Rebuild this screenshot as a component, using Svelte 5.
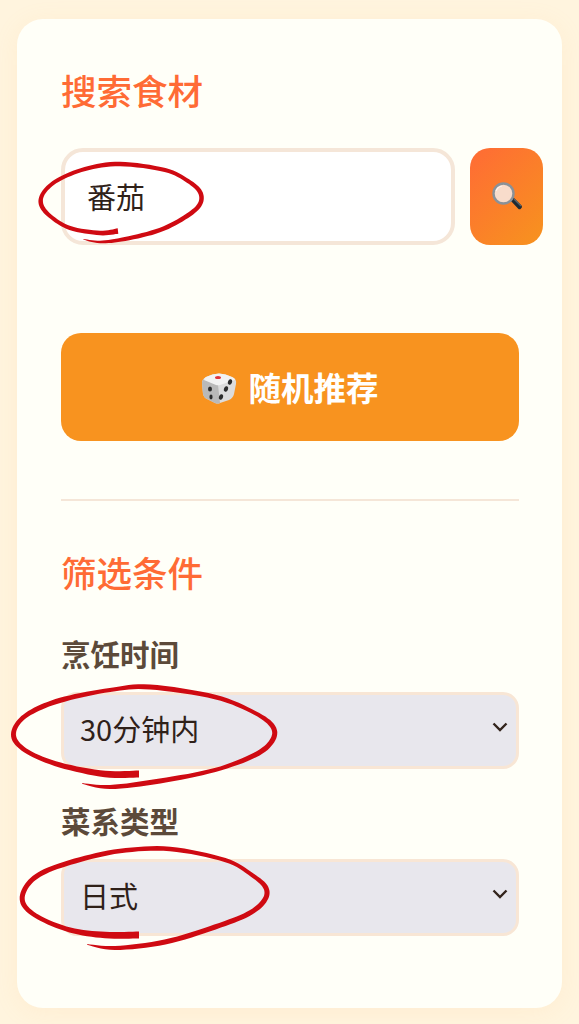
<script>
	let keyword = $state('番茄');
	let time = $state('30分钟内');
	let cuisine = $state('日式');

	const timeOptions = ['不限', '15分钟内', '30分钟内', '60分钟内'];
	const cuisineOptions = ['不限', '中式', '西式', '日式', '韩式'];

	// [x, y, width] along each pen stroke
	const marks = [
		[[118,231,5.5],[100,233,4.5],[70,228,4],[50,216,4],[41,204,4.5],[44,192,4],[58,180,4],[85,169,4],[120,164,4.5],[165,170,4],[188,181,4],[200,192,4.5],[200,204,4.5],[187,216,4.5],[160,230,4.5],[125,239,4],[100,242,2.5],[82,239,0.5]],
		[[139,774,7],[105,774,6.5],[60,765,5],[28,752,4.5],[14,738,5],[18,723,4.5],[35,710,5],[65,699,5],[110,690,4],[150,687,5],[215,697,4.5],[255,713,4],[273,727,5],[272,741,5],[255,755,5],[215,770,4],[160,781,5],[110,787,4],[80,783,0.5]],
		[[139,935,7],[105,935,6.5],[70,930,5],[38,917,4.5],[23,903,5],[26,887,5],[42,873,5],[75,861,5],[120,851,4.5],[170,849,4.5],[225,860,4],[252,875,4],[266,888,5],[264,901,5],[248,914,5],[215,927,5],[165,942,5],[115,948,4],[85,944,0.5]]
	];

	function strokePath(pts) {
		const left = [];
		const right = [];
		for (let i = 0; i < pts.length - 1; i++) {
			const p0 = pts[Math.max(i - 1, 0)];
			const p1 = pts[i];
			const p2 = pts[i + 1];
			const p3 = pts[Math.min(i + 2, pts.length - 1)];
			for (let s = 0; s < 8; s++) {
				const t = s / 8;
				const cr = (k) =>
					0.5 * (2 * p1[k] + (p2[k] - p0[k]) * t + (2 * p0[k] - 5 * p1[k] + 4 * p2[k] - p3[k]) * t * t + (3 * p1[k] - p0[k] - 3 * p2[k] + p3[k]) * t * t * t);
				const slope = (k) =>
					0.5 * (p2[k] - p0[k] + 2 * (2 * p0[k] - 5 * p1[k] + 4 * p2[k] - p3[k]) * t + 3 * (3 * p1[k] - p0[k] - 3 * p2[k] + p3[k]) * t * t);
				const dx = slope(0);
				const dy = slope(1);
				const len = Math.hypot(dx, dy) || 1;
				const w = cr(2) / 2;
				left.push([cr(0) - (dy / len) * w, cr(1) + (dx / len) * w]);
				right.push([cr(0) + (dy / len) * w, cr(1) - (dx / len) * w]);
			}
		}
		const all = left.concat(right.reverse());
		return 'M' + all.map((p) => p[0].toFixed(1) + ' ' + p[1].toFixed(1)).join('L') + 'Z';
	}
</script>

<div class="page">
	<main class="card">
		<h2>搜索食材</h2>
		<div class="search-row">
			<input class="search-input" type="text" bind:value={keyword} />
			<button class="search-btn" type="button" aria-label="搜索">
				<svg width="32" height="32" viewBox="0 0 32 32">
					<path d="M19 19l3-3 8 8a2 2 0 0 1 0 3.4 2 2 0 0 1-3 0z" fill="#1f2a33" />
					<path d="M23 18l7 7" stroke="#55636e" stroke-width="1.2" />
					<circle cx="12.5" cy="12.5" r="10" fill="#f8dccb" stroke="#8a9198" stroke-width="2.4" />
					<path d="M5 10a8 8 0 0 1 6-5" stroke="#fff" stroke-width="1.2" fill="none" opacity="0.7" />
				</svg>
			</button>
		</div>

		<button class="random-btn" type="button">
			<svg width="36" height="34" viewBox="0 0 36 34">
				<path d="M5 7 Q18 0 31 7 Q36 9 35 14 L33 24 Q32 28 28 30 L19 33 Q17 34 14 33 L6 29 Q3 28 2 24 L1 13 Q1 9 5 7z" fill="#dcdcdc" />
				<path d="M19 33 Q17 34 14 33 L6 29 Q3 28 2 24 L1 13 Q1 10 3 9 L17 15 Z" fill="#b9b9b9" />
				<path d="M5 7 Q18 0 31 7 Q34 8 34 10 L19 15 Q17 15.500 15 15 L3 10 Q3 8 5 7z" fill="#f2f2f2" />
				<ellipse cx="17" cy="7.500" rx="3" ry="1.600" fill="#e0343c" />
				<ellipse cx="9" cy="19" rx="2" ry="2.600" fill="#2c2c2c" />
				<ellipse cx="10" cy="27" rx="1.600" ry="2.400" fill="#2c2c2c" />
				<ellipse cx="29" cy="12" rx="2" ry="2.800" fill="#2c2c2c" transform="rotate(20 29 12)" />
				<ellipse cx="25" cy="19" rx="2" ry="2.800" fill="#2c2c2c" transform="rotate(20 25 19)" />
				<ellipse cx="20" cy="27" rx="2" ry="2.800" fill="#2c2c2c" transform="rotate(20 20 27)" />
			</svg>
			<span>随机推荐</span>
		</button>

		<hr />

		<h2 class="filter-title">筛选条件</h2>

		<label class="field-label" for="time">烹饪时间</label>
		<div class="select-wrap">
			<select id="time" bind:value={time}>
				{#each timeOptions as opt}
					<option value={opt}>{opt}</option>
				{/each}
			</select>
			<svg class="chevron" width="16" height="10" viewBox="0 0 16 10">
				<path d="M1.500 1.500L8 8l6.500-6.500" fill="none" stroke="#33241c" stroke-width="2.400" />
			</svg>
		</div>

		<label class="field-label second" for="cuisine">菜系类型</label>
		<div class="select-wrap">
			<select id="cuisine" bind:value={cuisine}>
				{#each cuisineOptions as opt}
					<option value={opt}>{opt}</option>
				{/each}
			</select>
			<svg class="chevron" width="16" height="10" viewBox="0 0 16 10">
				<path d="M1.500 1.500L8 8l6.500-6.500" fill="none" stroke="#33241c" stroke-width="2.400" />
			</svg>
		</div>
	</main>

	<!-- red pen annotations drawn over the form -->
	<svg class="marks" width="579" height="1024" viewBox="0 0 579 1024" aria-hidden="true">
		{#each marks as mark}
			<path d={strokePath(mark)} fill="#cf0a12" />
		{/each}
	</svg>
</div>

<style>
	:global(body) {
		background: #fff4de;
	}

	.page {
		position: relative;
		box-sizing: border-box;
		height: 1024px;
		padding: 19px 17px 16px;
		overflow: hidden;
		background: #fff4de;
		font-family: "Noto Sans CJK SC", "Noto Sans", sans-serif;
		color: #33241c;
	}

	.card {
		box-sizing: border-box;
		height: 989px;
		padding: 48px 43px 0 44px;
		background: #fffff8;
		border-radius: 26px;
		box-shadow: 0 4px 24px rgba(255, 200, 120, 0.12);
	}

	h2 {
		margin: 0;
		font-size: 35.5px;
		line-height: 46px;
		font-weight: 500;
		color: #ff6b35;
	}

	.search-row {
		display: flex;
		gap: 15px;
		margin-top: 35px;
	}

	.search-input {
		box-sizing: border-box;
		flex: none;
		width: 394px;
		height: 97px;
		padding: 0 22px 2px;
		background: #fff;
		border: 4px solid #f5e6d8;
		border-radius: 22px;
		font: inherit;
		font-size: 29px;
		color: #2f2119;
		outline: none;
	}

	.search-btn {
		flex: none;
		display: flex;
		align-items: center;
		justify-content: center;
		width: 73px;
		height: 97px;
		padding: 0;
		border: none;
		border-radius: 20px;
		background: linear-gradient(135deg, #ff6b35, #f7931e);
		cursor: pointer;
	}

	.random-btn {
		display: flex;
		align-items: center;
		justify-content: center;
		gap: 11px;
		width: 100%;
		height: 108px;
		margin-top: 88px;
		padding: 0;
		border: none;
		border-radius: 20px;
		background: #f8931f;
		color: #fff;
		font: inherit;
		font-size: 32.5px;
		font-weight: 700;
		cursor: pointer;
	}

	.random-btn span {
		margin-bottom: 2px;
	}

	hr {
		height: 2px;
		margin: 58px 0 0;
		border: none;
		background: #f5e6d8;
	}

	.filter-title {
		margin-top: 48px;
	}

	.field-label {
		display: block;
		margin-top: 38px;
		font-size: 29.5px;
		line-height: 40px;
		font-weight: 700;
		color: #5c4a3a;
	}

	.field-label.second {
		margin-top: 31px;
	}

	.select-wrap {
		position: relative;
		margin-top: 19px;
	}

	select {
		display: block;
		box-sizing: border-box;
		width: 100%;
		height: 77px;
		padding: 0 16px 5px;
		background: #e8e7ed;
		border: 3px solid #f8e6d5;
		border-radius: 16px;
		font: inherit;
		font-size: 29px;
		color: #2f2119;
		appearance: none;
		outline: none;
	}

	.chevron {
		position: absolute;
		top: 30px;
		right: 11px;
		pointer-events: none;
	}

	.marks {
		position: absolute;
		inset: 0;
		pointer-events: none;
	}
</style>
